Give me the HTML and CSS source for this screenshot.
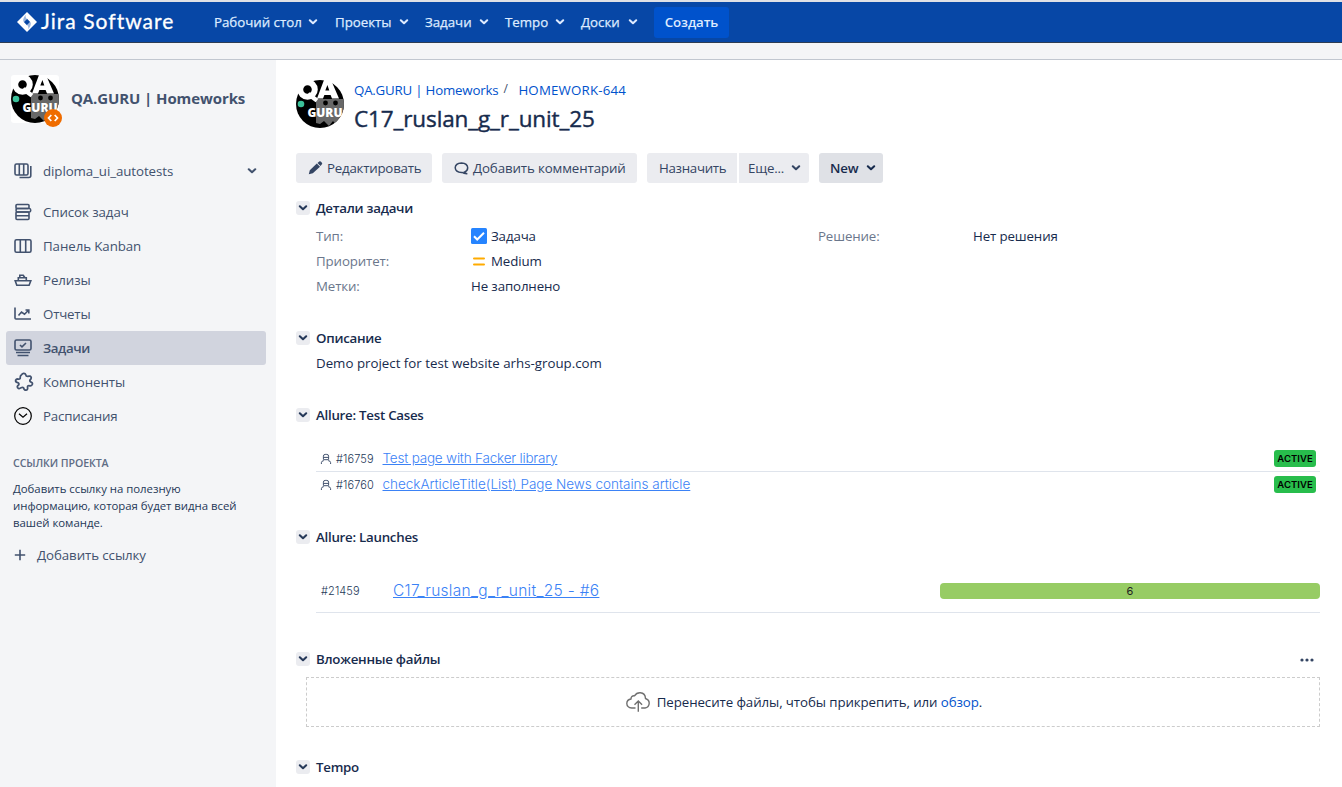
FILE: index.html
```html
<!DOCTYPE html>
<html lang="ru">
<head>
<meta charset="utf-8">
<title>HOMEWORK-644 C17_ruslan_g_r_unit_25</title>
<link rel="stylesheet" href="styles.css">
</head>
<body>
<svg class="defs" width="0" height="0">
  <symbol id="chev" viewBox="0 0 10 8"><path d="M1.800 2.300 5 5.200 8.200 2.300" fill="none" stroke="currentColor" stroke-width="2.100" stroke-linecap="round" stroke-linejoin="round"/></symbol>
  <symbol id="avatar" viewBox="0 0 48 48">
    <clipPath id="disc"><circle cx="24" cy="24" r="24"/></clipPath>
    <g clip-path="url(#disc)">
      <rect width="48" height="48" fill="#000"/>
      <path d="M20 19h28V45l-3-2.500-4 3.500-4-5-4 5-5-5-4 3-4-1z" fill="#686868"/>
      <circle cx="5" cy="24" r="3.300" fill="#3bc19a"/>
      <circle cx="29.500" cy="23" r="2.400" fill="#000"/><circle cx="39.500" cy="23" r="2.400" fill="#000"/>
    </g>
    <circle cx="11.500" cy="9.500" r="7.300" fill="none" stroke="#fff" stroke-width="6"/>
    <path d="M12 14 21 20.500" stroke="#fff" stroke-width="4.500"/>
    <path d="M21 18.500 28 0h7l8 18.500h-7l-1.400-3.500h-6.200L27 18.500zM29.300 10.500h4L31.400 5z" fill="#fff"/>
    <text x="11.500" y="36.500" class="avatar-word" textLength="35" lengthAdjust="spacingAndGlyphs">GURU</text>
  </symbol>
  <symbol id="user" viewBox="0 0 12 12"><path d="M3.400 6.500V3.200a1.800 1.800 0 0 1 1.800-1.800h1.600a1.800 1.800 0 0 1 1.800 1.800v3.300M3.400 4.400h5.200M3.400 6.700h5.200M1.400 11V9.600q0-1.700 2.400-2M10.600 11V9.600q0-1.700-2.400-2" fill="none" stroke="currentColor" stroke-width="1"/></symbol>
</svg>

<header class="topbar">
  <a class="logo"><svg width="20" height="20" viewBox="0 0 20 20"><path d="M10 0 20 10 10 20 0 10z" fill="#fff"/><path d="M10 6.800 13.200 10 10 13.200 6.800 10z" fill="#0747a6"/><path d="M10 1.500Q7.200 4 9.800 7L6.500 10Q5 6.500 10 1.500z" fill="#9db7de"/><path d="M10 18.500Q12.800 16 10.200 13L13.500 10Q15 13.500 10 18.500z" fill="#9db7de"/></svg><span>Jira Software</span></a>
  <nav class="topnav">
    <a class="n1">Рабочий стол<svg><use href="#chev"/></svg></a>
    <a class="n2">Проекты<svg><use href="#chev"/></svg></a>
    <a class="n3">Задачи<svg><use href="#chev"/></svg></a>
    <a class="n4">Tempo<svg><use href="#chev"/></svg></a>
    <a class="n5">Доски<svg><use href="#chev"/></svg></a>
  </nav>
  <button class="create">Создать</button>
</header>
<div class="announce"></div>

<div class="page">
<aside class="sidebar">
  <div class="project">
    <div class="project-pic"><svg width="48" height="48"><use href="#avatar"/></svg>
      <svg class="badge" width="18" height="18" viewBox="0 0 18 18"><circle cx="9" cy="9" r="9" fill="#ef6c00"/><path d="M7.300 6 4.500 9l2.800 3M10.700 6l2.800 3-2.800 3" fill="none" stroke="#fff" stroke-width="1.700"/></svg>
    </div>
    <span class="project-name">QA.GURU | Homeworks</span>
  </div>
  <div class="board">
    <svg width="18" height="18" viewBox="0 0 18 18" class="ico"><rect x="1" y="2" width="13" height="11" rx="1.500"/><path d="M5.300 2v11M9.700 2v11M16.800 4v9.500a2 2 0 0 1-2 2H5.500"/></svg>
    <span>diploma_ui_autotests</span><svg class="chev"><use href="#chev"/></svg>
  </div>
  <nav class="sidenav">
    <a><svg class="ico" width="18" height="18" viewBox="0 0 18 18"><rect x="2" y="1.500" width="13" height="4" rx="1"/><rect x="2" y="9" width="13" height="7.500" rx="1"/><path d="M2 12.700h13M2.500 5.500h13q1.200 0 1.200 1.700T15.500 9H2.500q-1-1.700 0-3.500"/></svg><span>Список задач</span></a>
    <a><svg class="ico" width="18" height="18" viewBox="0 0 18 18"><rect x="1" y="2.800" width="16" height="12.400" rx="1.500"/><path d="M6.300 3v12M11.700 3v12"/></svg><span>Панель Kanban</span></a>
    <a><svg class="ico" width="18" height="18" viewBox="0 0 18 18"><path d="M1.200 9.800h15.600l-1.700 4.400H2.800zM4.300 9.500V6.800h8v2.700M5.800 6.500V4.200h3.400l1.600 2.300"/></svg><span>Релизы</span></a>
    <a><svg class="ico" width="18" height="18" viewBox="0 0 18 18"><path d="M1 2.500V13q0 1 1 1h15M4.500 10.500 7.500 7l3 2.200 4-4M11.500 5h3.300v3.500"/></svg><span class="tight">Отчеты</span></a>
    <a class="on"><svg class="ico" width="18" height="18" viewBox="0 0 18 18"><rect x="1" y="1" width="16" height="10" rx="1.500"/><path d="M6 6l2 1.900 4-3.900M2 13.500h14M3.500 16.500h11"/></svg><span>Задачи</span></a>
    <a><svg class="ico comp" width="20" height="20" viewBox="0 0 18 18"><path d="M7 2.200a2 2 0 0 1 3.600.3q.2 1.500 1.700 1.500 2.700-1 3.200 1 .1 1.200-1 2-.7 1.200.5 1.900 2.200.8 1.400 2.500-.9 1.500-2.900.8-1.500.1-1.300 1.600.4 2.400-1.500 2.600-1.600 0-2-1.900-.8-1.200-2.200-.4-2 1.600-3.200.1-.9-1.600 1-2.700.5-1.500-1-1.900-2.200-.6-1.800-2.300.8-1.500 2.700-.8 1.600-.1 1.400-1.700-.2-1.600 1.400-2.600z"/></svg><span>Компоненты</span></a>
    <a><svg class="ico dark" width="18" height="18" viewBox="0 0 18 18"><circle cx="9" cy="9" r="8.300"/><path d="M5 6.800 9 10.300l4-3.500"/></svg><span class="tight">Расписания</span></a>
  </nav>
  <h4>ССЫЛКИ ПРОЕКТА</h4>
  <p class="hint"><span>Добавить ссылку на полезную</span><br><span>информацию, которая будет видна всей</span><br><span>вашей команде.</span></p>
  <a class="addlink"><svg width="12" height="12" viewBox="0 0 12 12" class="ico"><path d="M6 .8v10.400M.8 6h10.400"/></svg><span>Добавить ссылку</span></a>
</aside>

<main class="issue">
  <div class="issue-head">
    <svg width="48" height="48"><use href="#avatar"/></svg>
    <div>
      <div class="crumbs"><a class="parent">QA.GURU | Homeworks</a><i>/</i><a class="key">HOMEWORK-644</a></div>
      <h1>C17_ruslan_g_r_unit_25</h1>
    </div>
  </div>
  <div class="tools">
    <button class="b1"><svg width="15" height="14" viewBox="0 0 15 14"><path d="M.8 13.200 1.800 9.200l7-6.700 3.200 3.200L4.800 12.200zM9.500 1.900l1.700-1.500q.8-.5 1.600.1l1.100 1.200q.6.800 0 1.600l-1.400 1.600z" fill="#344563"/></svg><span>Редактировать</span></button>
    <button class="b2"><svg width="15" height="14" viewBox="0 0 15 14"><path d="M10.300 11.200Q13.700 10 13.700 6.800 13.500 2.300 7.500 2 1.300 2.300 1.200 6.800 1.500 11.200 7.500 11.500h.8q1.500 1.300 5 1.200-2.300-.4-3-1.500z" fill="none" stroke="#344563" stroke-width="1.500"/></svg><span>Добавить комментарий</span></button>
    <button class="b3"><span>Назначить</span></button>
    <button class="b4"><span>Еще...</span><svg class="chev"><use href="#chev"/></svg></button>
    <button class="b5"><span>New</span><svg class="chev"><use href="#chev"/></svg></button>
  </div>

  <section class="s-details">
    <h2><i><svg class="chev"><use href="#chev"/></svg></i><span>Детали задачи</span></h2>
    <dl>
      <dt>Тип:</dt><dd><svg width="16" height="16" viewBox="0 0 16 16"><rect width="16" height="16" rx="1.500" fill="#2684ff"/><path d="M3 8.300 6.200 11.500 13 4.800" fill="none" stroke="#fff" stroke-width="2"/></svg>Задача</dd><dt>Решение:</dt><dd>Нет решения</dd>
      <dt>Приоритет:</dt><dd><svg width="16" height="16" viewBox="0 0 16 16"><path d="M3 5.500h10M3 11.500h10" stroke="#ffab00" stroke-width="2" stroke-linecap="round"/></svg>Medium</dd><dt></dt><dd></dd>
      <dt>Метки:</dt><dd>Не заполнено</dd><dt></dt><dd></dd>
    </dl>
  </section>
  <section class="s-desc">
    <h2><i><svg class="chev"><use href="#chev"/></svg></i><span>Описание</span></h2>
    <p><span>Demo project for test website arhs-group.com</span></p>
  </section>
  <section class="s-cases">
    <h2><i><svg class="chev"><use href="#chev"/></svg></i><span>Allure: Test Cases</span></h2>
    <div class="case"><svg width="12" height="12"><use href="#user"/></svg><small>#16759</small><a class="c1">Test page with Facker library</a><b>ACTIVE</b></div>
    <div class="case"><svg width="12" height="12"><use href="#user"/></svg><small>#16760</small><a class="c2">checkArticleTitle(List) Page News contains article</a><b>ACTIVE</b></div>
  </section>
  <section class="s-launch">
    <h2><i><svg class="chev"><use href="#chev"/></svg></i><span>Allure: Launches</span></h2>
    <div class="launch"><small>#21459</small><a>C17_ruslan_g_r_unit_25 - #6</a><span class="bar">6</span></div>
  </section>
  <section class="s-files">
    <h2><i><svg class="chev"><use href="#chev"/></svg></i><span>Вложенные файлы</span><svg class="dots" width="14" height="4" viewBox="0 0 14 4"><circle cx="2" cy="2" r="1.600"/><circle cx="7" cy="2" r="1.600"/><circle cx="12" cy="2" r="1.600"/></svg></h2>
    <div class="drop"><svg width="24" height="20" viewBox="0 0 24 20"><path d="M9.500 16H5.700Q1 15.500.8 11.500 1 7.500 5 7 5 3.500 8.500 3.800 10.500.6 14.300.8 19.300 1.200 19.500 6.500 23.200 7.800 23.200 11.300 23 15.500 19 16h-3.800M12.300 19.800V9M8.500 12.700 12.300 9l3.800 3.700" fill="none" stroke="#707070" stroke-width="1.400"/></svg><span>Перенесите файлы, чтобы прикрепить, или <a>обзор</a>.</span></div>
  </section>
  <section class="s-tempo">
    <h2><i><svg class="chev"><use href="#chev"/></svg></i><span>Tempo</span></h2>
  </section>
</main>
</div>
</body>
</html>
```
FILE: styles.css
```css
* { box-sizing: border-box; }
body { margin: 0; height: 787px; overflow: hidden; background: #fff; color: #172b4d; font: 13.3px/20px "Open Sans", "Noto Sans", sans-serif; display: flex; flex-direction: column; white-space: nowrap; }
.defs { display: block; flex: none; height: 0; }
h1, h2, h4, p, dl, dd, dt { margin: 0; font-weight: 400; }
button { border: 0; padding: 0; margin: 0; font: inherit; color: inherit; letter-spacing: inherit; }
svg { flex: none; display: block; }
.avatar-word { font: 800 13px "Open Sans", sans-serif; fill: #fff; }

.topbar { flex: none; height: 43px; background: #0747a6; border-top: 2px solid #dfe1e6; border-bottom: 1px solid #2e3d54; display: flex; align-items: center; padding-left: 17px; color: #deebff; }
.logo { display: flex; align-items: center; width: 197px; gap: 4px; color: #fff; }
.logo span { font: 400 21px/24px Lato, sans-serif; letter-spacing: 1.03px; -webkit-text-stroke: .3px #fff; margin-top: -2px; }
.topnav { display: flex; -webkit-text-stroke: .25px #deebff; letter-spacing: -.02px; }
.topnav a { display: flex; align-items: center; justify-content: space-between; margin-right: 16px; }
.topnav svg, .chev { width: 10px; height: 8px; }
.n1 { width: 104px; } .n2 { width: 74px; } .n3 { width: 64px; } .n4 { width: 60px; } .n5 { width: 57px; }
.topnav .n1 { margin-right: 17px; }
.create { width: 75px; height: 31px; border-radius: 3px; background: #0052cc; font-weight: 600; letter-spacing: -.1px; }
.announce { flex: none; height: 17px; background: #f4f5f7; border-bottom: 1px solid #c1c7d0; }

.page { flex: 1; display: flex; min-height: 0; }
.sidebar { width: 276px; background: #f4f5f7; color: #42526e; flex: none; letter-spacing: -.08px; }
.project { display: flex; align-items: center; padding: 15px 0 0 11px; gap: 12px; }
.project-pic { position: relative; width: 48px; height: 48px; background: #fff; border-radius: 3px; }
.badge { position: absolute; left: 33px; top: 34px; }
.project-name { font-size: 15px; font-weight: 700; margin-top: -2px; letter-spacing: -.1px; }
.ico { fill: none; stroke: #42526e; stroke-width: 1.6; }
.board { display: flex; align-items: center; height: 34px; margin-top: 31px; padding-left: 14px; }
.board span { margin-left: 11px; width: 204px; }
.sidenav { padding: 7px 10px 0 6px; }
.sidenav a { display: flex; align-items: center; height: 34px; padding-left: 8px; gap: 11px; border-radius: 3px; }
.sidenav .on { background: #d1d4de; font-weight: 600; letter-spacing: -.4px; }
.tight { letter-spacing: -.2px; }
.comp { margin-right: -2px; }
.dark { stroke: #000; stroke-width: 1.2; }
.sidebar h4 { font-size: 10.6px; font-weight: 600; color: #5e6c84; margin: 20px 0 0 13px; }
.hint { font-size: 11.4px; line-height: 17px; margin: 7px 0 0 13px; color: #253858; letter-spacing: -.03px; }
.addlink { display: flex; align-items: center; gap: 11px; margin: 14px 0 0 14px; }

.issue { flex: 1; padding: 20px 22px 0 20px; min-width: 0; }
.issue-head { display: flex; gap: 10px; height: 48px; }
.crumbs { display: flex; color: #0052cc; }
.parent { letter-spacing: -.21px; }
.key { letter-spacing: .18px; }
.crumbs i { color: #42526e; font-style: normal; font-size: 12px; width: 20px; padding-left: 5px; line-height: 17px; }
h1 { font-size: 22.5px; line-height: 28px; margin-top: 5px; letter-spacing: -.12px; -webkit-text-stroke: .4px #172b4d; }
.tools { display: flex; margin-top: 25px; color: #344563; letter-spacing: -.12px; }
.tools button { height: 30px; background: #ebecf0; border-radius: 3px; display: flex; align-items: center; padding-left: 12px; }
.b1 { width: 136px; margin-right: 10px; gap: 4px; } .b2 { width: 195px; margin-right: 10px; gap: 4px; }
.tools .b1 { letter-spacing: -.23px; }
.tools .b3 { width: 90px; margin-right: 2px; border-radius: 3px 0 0 3px; letter-spacing: -.3px; }
.tools .b4 { width: 70px; margin-right: 10px; border-radius: 0 3px 3px 0; padding: 0 8px 0 9px; justify-content: space-between; letter-spacing: -.2px; }
.tools .b5 { width: 64px; background: #dfe1e6; padding: 0 7px 0 11px; justify-content: space-between; font-weight: 600; color: #172b4d; }
h2 { display: flex; align-items: center; height: 20px; font-size: 13.3px; font-weight: 600; letter-spacing: -.26px; }
h2 i { width: 14px; height: 14px; background: #ebecf0; border-radius: 3px; display: flex; align-items: center; justify-content: center; margin-right: 6px; color: #253858; }
.s-details { margin-top: 15px; }
dl { display: grid; grid-template-columns: 155px 347px 155px 1fr; grid-auto-rows: 25px; padding: 5px 0 0 20px; letter-spacing: -.13px; }
dt, dd { display: flex; align-items: center; gap: 4px; }
dd svg { margin-top: 1px; }
dt { color: #6b778c; }
.s-desc { margin-top: 30px; }
.s-desc p { padding: 5px 0 0 20px; }
.s-cases { margin-top: 32px; }
.s-cases h2 { margin-bottom: 21px; }
.case { display: flex; align-items: center; height: 26px; margin-left: 20px; padding: 0 4px; font-family: Inter, sans-serif; color: #42526e; border-bottom: 1px solid #dfe4ec; }
.case:last-child { border: 0; padding-bottom: 1px; }
small { font: 300 11px/20px Inter, sans-serif; color: #253858; letter-spacing: .08px; }
.case small { margin-left: 4px; width: 46.500px; }
.case a, .launch a { color: #3b82f6; text-decoration: underline; font-weight: 300; font-size: 13.5px; }
.case a { margin-top: -2px; }
.case .c1 { letter-spacing: -.2px; }
.case .c2 { letter-spacing: -.02px; }
.case b { margin-left: auto; width: 42px; height: 17px; background: #28bd4c; border-radius: 3px; font: 600 9.5px/17px Inter, sans-serif; letter-spacing: .05px; color: #000; text-align: center; }
.s-launch { margin-top: 29px; }
.launch { display: flex; align-items: center; height: 44px; margin: 22px 0 0 20px; padding-left: 5px; border-bottom: 1px solid #dfe4ec; font-family: Inter, sans-serif; }
.launch small { width: 72px; }
.launch a { font-size: 15.5px; letter-spacing: .3px; }
.bar { margin-left: auto; width: 380px; height: 16px; border-radius: 4px; background: #97cc64; font-size: 11px; line-height: 16px; text-align: center; color: #222; }
.s-files { margin-top: 36px; }
.dots { margin: 2px 6px 0 auto; fill: #344563; }
.drop { margin: 8px 0 0 10px; height: 50px; border: 1px dashed #ccc; display: flex; align-items: center; justify-content: center; gap: 7px; padding-right: 18px; letter-spacing: -.09px; }
.drop a { color: #0052cc; }
.s-tempo { margin-top: 30px; }
```
